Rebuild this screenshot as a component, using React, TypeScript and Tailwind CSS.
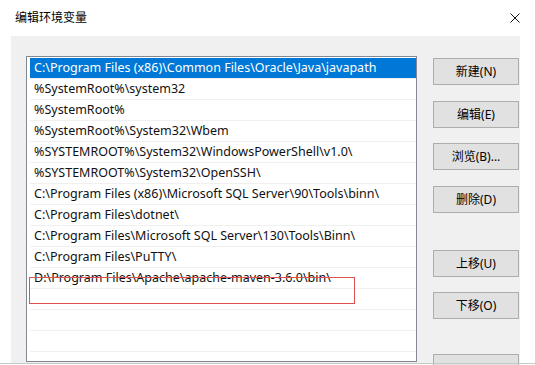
import React from "react";

const PATHS: string[] = [
  "C:\\Program Files (x86)\\Common Files\\Oracle\\Java\\javapath",
  "%SystemRoot%\\system32",
  "%SystemRoot%",
  "%SystemRoot%\\System32\\Wbem",
  "%SYSTEMROOT%\\System32\\WindowsPowerShell\\v1.0\\",
  "%SYSTEMROOT%\\System32\\OpenSSH\\",
  "C:\\Program Files (x86)\\Microsoft SQL Server\\90\\Tools\\binn\\",
  "C:\\Program Files\\dotnet\\",
  "C:\\Program Files\\Microsoft SQL Server\\130\\Tools\\Binn\\",
  "C:\\Program Files\\PuTTY\\",
  "D:\\Program Files\\Apache\\apache-maven-3.6.0\\bin\\",
  "",
  "",
  "",
  "",
];

// label + margin above each button
const BUTTONS: { label: string; mt: string }[] = [
  { label: "新建(N)", mt: "mt-0" },
  { label: "编辑(E)", mt: "mt-[16px]" },
  { label: "浏览(B)...", mt: "mt-[15px]" },
  { label: "删除(D)", mt: "mt-[16px]" },
  { label: "上移(U)", mt: "mt-[37px]" },
  { label: "下移(O)", mt: "mt-[15px]" },
  { label: "", mt: "mt-[35px]" },
];

const FONT = { fontFamily: '"Noto Sans", "Noto Sans CJK SC", sans-serif' };

export default function App() {
  return (
    <div
      className="relative w-[535px] h-[365px] bg-white overflow-hidden text-[12px] text-black"
      style={FONT}
    >
      {/* title bar */}
      <div className="h-[36px] flex items-center justify-between pl-[15px] pr-[15px]">
        <span className="text-[12px] leading-none">编辑环境变量</span>
        <svg width="10" height="10" viewBox="0 0 10 10">
          <path d="M0.5 0.5 L9.5 9.5 M9.5 0.5 L0.5 9.5" stroke="#111" strokeWidth="1" />
        </svg>
      </div>

      {/* body */}
      <div className="ml-[11px] w-[509px] h-[327px] bg-[#f0f0f0] flex pl-[15px] pt-[20px]">
        {/* list */}
        <div className="relative w-[391px] h-[306px] bg-white border border-[#828790] pl-[3px] pt-[1px] overflow-hidden text-[12.5px]">
          {PATHS.map((p, i) => (
            <div
              key={i}
              className={
                "h-[21px] flex items-center pl-[4px] border-b border-[#f0f0f0] whitespace-nowrap " +
                (i === 0 ? "bg-[#0078d7] text-white border-[#0078d7]" : "text-[#111]")
              }
            >
              {p}
            </div>
          ))}
          {/* red annotation box */}
          <div className="absolute left-[2px] top-[220px] w-[326px] h-[27px] border border-[#e05050]" />
        </div>

        {/* buttons */}
        <div className="ml-[16px] w-[86px] pt-[2px] flex flex-col">
          {BUTTONS.map((b, i) => (
            <div
              key={i}
              className={
                "h-[27px] shrink-0 flex items-center justify-center bg-[#e1e1e1] border border-[#adadad] " +
                b.mt
              }
            >
              {b.label}
            </div>
          ))}
        </div>
      </div>

      <div className="absolute left-0 top-[363px] w-full h-px bg-[#c8c8c8]" />
    </div>
  );
}
